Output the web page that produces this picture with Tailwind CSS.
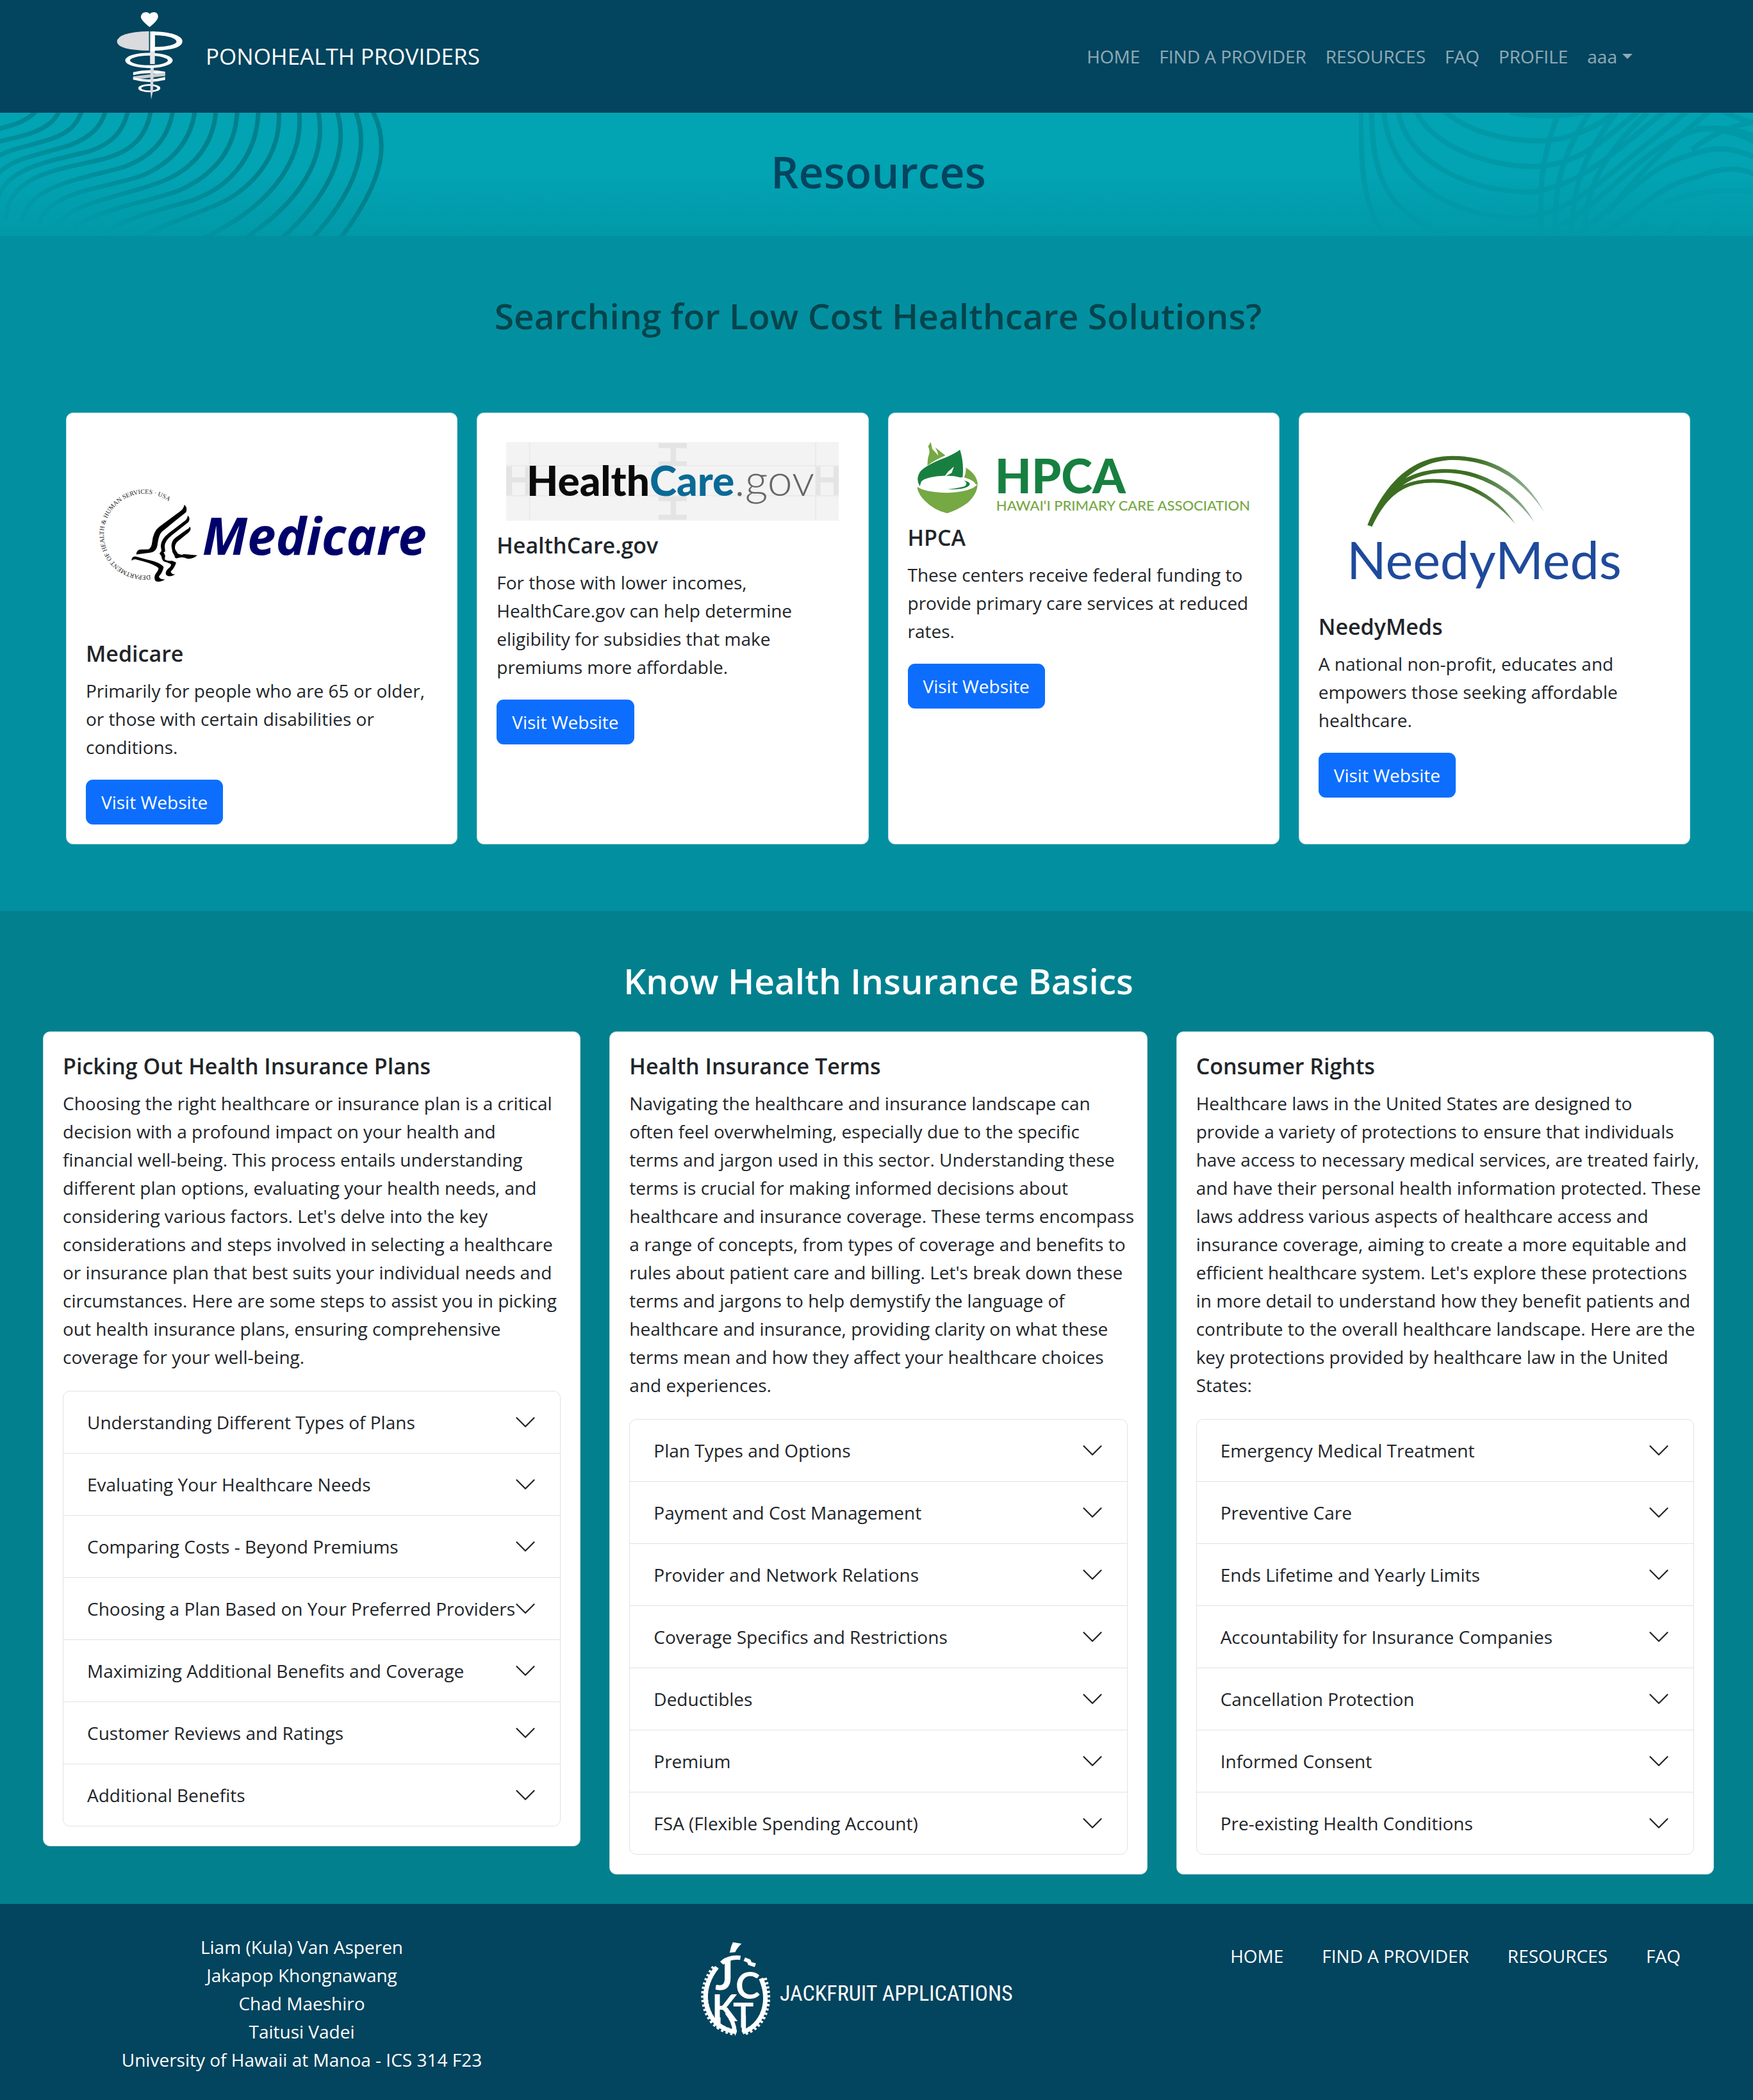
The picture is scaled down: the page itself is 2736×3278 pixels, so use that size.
<!DOCTYPE html>
<html lang="en">
<head>
<meta charset="utf-8">
<meta name="viewport" content="width=device-width, initial-scale=1">
<title>PonoHealth Providers - Resources</title>
<script src="https://cdn.jsdelivr.net/npm/@tailwindcss/browser@4"></script>
</head>
<body class="bg-[#03445e] font-['Open_Sans','Noto_Sans',sans-serif] text-[28px] leading-[44px] text-[#212529]">
<svg class="hidden" aria-hidden="true">
  <symbol id="chevron" viewBox="0 0 16 16"><path fill="none" stroke="#212529" stroke-linecap="round" stroke-linejoin="round" d="M2 5l6 6 6-6"/></symbol>
</svg>

<header class="flex items-center justify-between bg-[#03445e] py-4 pl-[182px] pr-[188px]">
  <a href="#" class="flex items-center gap-[35px] text-[35px] text-white">
    <svg class="h-36 w-[104px]" viewBox="182 16 104 144" aria-hidden="true">
      <g transform="scale(.574 .3333)">
        <path fill="#fff" d="M407 127Q383 95 383 78Q385 57 397 57Q405 58 407 66Q410 57 420 57Q430 60 430 78Q430 95 407 127Z"/>
        <path fill="#dadbde" d="M405 146Q320 150 318 195Q320 235 405 237Z"/>
        <ellipse cx="405" cy="283" rx="58" ry="29" fill="none" stroke="#fff" stroke-width="13"/>
        <path fill="#e6e7ea" d="M408 147H421V300H408Z"/>
        <path fill="#fff" d="M413 147C470 149 497 170 496 195C495 220 470 235 421 237V220C450 220 480 210 480 195C480 177 450 165 421 165V240H409Z"/>
        <path fill="#fff" d="M362 338Q405 320 449 336V352Q405 334 362 352Z"/>
        <path fill="#c9ccd1" d="M449 340V356L362 373V358Z"/>
        <path fill="#fff" d="M362 362Q405 383 449 360V374Q405 394 362 373Z"/>
        <ellipse cx="406" cy="413" rx="26" ry="15" fill="none" stroke="#fff" stroke-width="8"/>
        <path fill="#d5d8dc" d="M409 318H418L416 425L411 466L409 425Z"/>
      </g>
    </svg>
    PONOHEALTH PROVIDERS
  </a>
  <nav class="flex items-center gap-[30px] text-white/55">
    <a href="#">HOME</a>
    <a href="#">FIND A PROVIDER</a>
    <a href="#">RESOURCES</a>
    <a href="#">FAQ</a>
    <a href="#">PROFILE</a>
    <button type="button" class="flex items-center gap-2">aaa
      <svg class="h-2 w-4" viewBox="0 0 16 8" aria-hidden="true"><path fill="currentColor" d="M0 0H16L8 8Z"/></svg>
    </button>
  </nav>
</header>

<main>
  <section class="relative overflow-hidden bg-linear-to-b from-[#02a3b3] from-50% to-[#0199a8] pt-12 pb-14 pl-[6px]">
    <svg class="absolute left-0 top-0 h-full w-[600px] [&_path]:[vector-effect:non-scaling-stroke]" viewBox="0 528 1045 576" preserveAspectRatio="none" aria-hidden="true">
      <defs>
        <linearGradient id="fadeLeft" gradientUnits="userSpaceOnUse" x1="700" y1="528" x2="350" y2="1104">
          <stop offset=".3" stop-color="#01818d"/><stop offset="1" stop-color="#0199a8"/>
        </linearGradient>
      </defs>
      <g fill="none" stroke="url(#fadeLeft)" stroke-width="7">
        <path d="M1013 520C1055 660 1050 830 928 1110"/>
        <path d="M966 520C1000 660 985 860 852 1110"/>
        <path d="M916 520C945 680 915 880 770 1110"/>
        <path d="M865 520C885 690 850 900 672 1110"/>
        <path d="M813 520C825 720 760 940 560 1110"/>
        <path d="M758 520C765 720 690 900 560 980C500 1020 440 1060 380 1110"/>
        <path d="M702 520C700 700 640 870 520 940C420 990 340 1020 270 1104"/>
        <path d="M645 520C640 690 590 810 490 890C400 950 260 980 200 1070"/>
        <path d="M587 520C580 670 530 790 440 850C340 920 200 940 150 1060"/>
        <path d="M530 520C520 640 480 750 390 820C300 880 130 890 105 1050"/>
        <path d="M470 520C460 620 430 720 340 780C250 830 70 860 60 1040"/>
        <path d="M410 520C400 620 370 700 290 740C190 790 20 800 15 1030"/>
        <path d="M348 520C335 610 310 670 240 710C150 750 20 780-5 925"/>
        <path d="M287 520C275 590 250 640 190 680C120 720 30 740-5 815"/>
        <path d="M222 520C210 580 190 620 140 650C90 680 30 695-5 732"/>
        <path d="M160 520C150 570 120 600 90 620C60 640 25 650-5 664"/>
        <path d="M98 520C75 565 40 585-5 604"/>
      </g>
    </svg>
    <svg class="absolute right-0 top-0 h-full w-[615px] [&_path]:[vector-effect:non-scaling-stroke]" viewBox="680 528 888 576" preserveAspectRatio="none" aria-hidden="true">
      <g fill="none" stroke="#0199a8" stroke-width="8">
        <path d="M684 520C684 760 688 1000 745 1110"/>
        <path d="M708 520C712 760 720 1010 900 1110"/>
        <path d="M736 520C750 840 880 1010 1035 1022C1160 1010 1230 830 1350 640L1420 520"/>
        <path d="M768 520C790 760 920 890 1060 900C1180 880 1260 700 1370 520"/>
        <path d="M808 520C850 690 970 780 1080 780C1180 770 1240 640 1310 520"/>
        <path d="M872 520C930 620 1010 662 1090 660C1160 655 1220 590 1260 520"/>
        <path d="M1020 525Q1100 560 1190 525"/>
        <path d="M1130 528C1090 740 1085 900 1092 1110M1200 528C1130 740 1120 900 1122 1110M1260 528C1180 740 1160 900 1158 1110M1330 528C1210 760 1190 920 1188 1110"/>
        <path d="M1130 1060C1230 950 1300 740 1400 640Q1480 560 1575 640"/>
        <path d="M1170 1100C1270 950 1330 780 1420 730Q1500 660 1575 740"/>
        <path d="M1220 1104C1320 980 1350 870 1440 830Q1520 760 1575 820"/>
        <path d="M1500 520Q1540 560 1575 580M1440 600Q1520 600 1575 670M1575 570Q1500 590 1430 700M1470 520C1400 640 1310 800 1240 1000"/>
        <path d="M1370 950Q1460 870 1575 900M1330 1040L1300 1110M1400 1040L1370 1110M1490 1040L1460 1110" stroke-opacity=".4"/>
      </g>
    </svg>
    <h1 class="relative text-center text-[68px] font-semibold leading-[88px] text-[#03445e]">Resources</h1>
  </section>

  <section class="bg-[#0290a1] pt-[90px] pr-[98px] pb-[104px] pl-[103px]">
    <h2 class="mb-[116px] text-center text-[55px] font-semibold leading-[70px] text-[#05444c]">Searching for Low Cost Healthcare Solutions?</h2>
    <div class="grid grid-cols-4 gap-[30px]">
      <article class="rounded-[11px] border border-[#c5dfe3] bg-white p-[30px]">
        <svg class="mb-[15px] w-full px-[15px] pt-[15px]" viewBox="150 690 520 292" role="img" aria-label="Medicare logo">
          <path id="ring" fill="none" d="M236 898A64 64 0 1 1 278 796"/>
          <text class="font-['Liberation_Serif',serif] text-[10px]" fill="#222"><textPath href="#ring">DEPARTMENT OF HEALTH &amp; HUMAN SERVICES · USA</textPath></text>
          <g transform="translate(90 630) scale(.4082 .4464)">
            <path d="M487 354Q500 362 494 380L450 412L402 448Q390 458 385 490Q382 520 355 522L303 528Q305 510 322 511L350 510Q362 505 364 485Q368 448 390 432L470 378Q485 368 487 354Z"/>
            <path d="M500 392Q512 400 503 415L440 460Q412 480 412 500L414 518L408 520L414 532L412 545Q420 552 440 550L456 556Q450 575 435 588Q440 600 453 597Q430 610 418 600Q412 590 425 578Q438 570 436 562Q425 556 408 552Q400 545 400 535L392 525L400 515L397 500Q398 475 425 455L490 410Q500 402 500 392Z"/>
            <path d="M508 430Q516 440 505 450L465 480Q448 492 452 510L462 525Q475 532 485 527Q505 528 537 531Q520 545 500 543Q480 535 465 540Q450 545 450 533L442 520L438 500Q437 480 455 468L495 442Q507 436 508 430Z"/>
            <path d="M285 550Q285 535 300 535L340 545Q395 555 408 572Q405 590 390 605Q390 615 413 616Q395 627 378 622Q368 610 378 595Q390 582 388 575Q370 562 330 552L300 545Q290 545 285 550Z"/>
          </g>
          <text x="317" y="866" class="text-[80px] font-bold italic" fill="#00006b">Medicare</text>
        </svg>
        <h3 class="mb-[13px] text-[34px] font-semibold leading-[46px]">Medicare</h3>
        <p class="mb-[29px]">Primarily for people who are 65 or older, or those with certain disabilities or conditions.</p>
        <a href="#" class="inline-block rounded-[11px] bg-[#0d6efd] px-6 py-[13px] text-white">Visit Website</a>
      </article>

      <article class="rounded-[11px] border border-[#c5dfe3] bg-white p-[30px]">
        <svg class="mb-[15px] w-full px-[15px] pt-[15px]" viewBox="790 690 520 123" role="img" aria-label="HealthCare.gov logo">
          <path fill="#f3f3f3" d="M790 690H1310V813H790Z"/>
          <g transform="translate(740 630) scale(.4082 .3571)">
            <path fill="none" stroke="#e9e9e9" stroke-width="4" d="M212 168V512M1308 168V512M122 272H1396M122 403H1396"/>
            <path fill="#e4e4e4" d="M706 173H814V195H773V252H814V272H706V252H752V195H706ZM706 405H814V427H773V486H814V508H706V486H752V427H706ZM122 275H145V322H195V275H215V400H195V345H145V400H122ZM1308 275H1326V322H1376V275H1396V400H1376V345H1326V400H1308Z"/>
          </g>
          <text y="774" class="font-['Lato',sans-serif] text-[64px] font-black"><tspan x="822" fill="#0a0a0a">Health</tspan><tspan fill="#0a6a96">Care</tspan><tspan class="text-[70px] font-light" fill="#666">.gov</tspan></text>
        </svg>
        <h3 class="mb-[13px] text-[34px] font-semibold leading-[46px]">HealthCare.gov</h3>
        <p class="mb-[29px]">For those with lower incomes, HealthCare.gov can help determine eligibility for subsidies that make premiums more affordable.</p>
        <a href="#" class="inline-block rounded-[11px] bg-[#0d6efd] px-6 py-[13px] text-white">Visit Website</a>
      </article>

      <article class="rounded-[11px] border border-[#c5dfe3] bg-white p-[30px]">
        <svg class="mb-[15px] w-full px-[15px] pt-[15px]" viewBox="1432 690 520 111" role="img" aria-label="HPCA logo">
          <g transform="translate(1380 630) scale(.4082 .3333)">
            <path fill="#76a844" d="M178 180L168 200Q175 215 172 235Q164 260 166 290Q195 262 234 243L195 205Q205 225 207 244L184 212Z"/>
            <path fill="#178040" d="M290 216Q306 280 300 345L290 346Q265 337 236 339L258 325L267 295L245 318L233 338Q160 342 142 365L136 387Q118 350 140 315Q165 285 230 255Q270 235 290 216Z"/>
            <path fill="#76a844" d="M312 300Q355 330 358 380L350 378Q345 360 306 346Q315 320 312 300Z"/>
            <path fill="#76a844" d="M125 388Q150 415 240 418Q330 415 357 378Q358 420 320 465Q280 500 241 514Q190 500 155 455Q130 425 125 388Z"/>
            <path fill="#178040" d="M306 360Q342 372 318 390Q290 405 243 402Q290 395 308 387Q322 375 306 360Z"/>
          </g>
          <text x="1553" y="770" class="font-['Lato',sans-serif] text-[74px] font-black" fill="#178040">HPCA</text>
          <text x="1555" y="797" class="font-['Lato',sans-serif] text-[22px] font-medium" fill="#76a844">HAWAI‘I PRIMARY CARE ASSOCIATION</text>
        </svg>
        <h3 class="mb-[13px] text-[34px] font-semibold leading-[46px]">HPCA</h3>
        <p class="mb-[29px]">These centers receive federal funding to provide primary care services at reduced rates.</p>
        <a href="#" class="inline-block rounded-[11px] bg-[#0d6efd] px-6 py-[13px] text-white">Visit Website</a>
      </article>

      <article class="rounded-[11px] border border-[#c5dfe3] bg-white p-[30px]">
        <svg class="mb-[15px] w-full px-[15px] pt-[15px]" viewBox="2073 690 520 250" role="img" aria-label="NeedyMeds logo">
          <defs>
            <linearGradient id="blade" gradientUnits="userSpaceOnUse" x1="300" y1="0" x2="950" y2="0">
              <stop offset=".6" stop-color="#3c6e22"/><stop offset="1" stop-color="#a3bfae"/>
            </linearGradient>
          </defs>
          <g transform="translate(2010 630) scale(.4209 .4464)" fill="url(#blade)">
            <path d="M296 425C370 255 480 183 610 183C760 183 880 250 952 380C870 262 750 197 610 197C490 200 390 270 312 430Z"/>
            <path d="M296 425C350 290 450 229 585 229C720 229 850 300 915 415C835 310 710 242 585 242C450 244 380 300 312 430Z"/>
            <path d="M296 425C350 310 430 264 540 264C670 264 780 325 845 422C765 335 660 277 540 277C430 277 370 320 312 430Z"/>
          </g>
          <text x="2102" y="904" class="font-['Lato',sans-serif] text-[81px]" fill="#1f4a9c">NeedyMeds</text>
        </svg>
        <h3 class="mb-[13px] text-[34px] font-semibold leading-[46px]">NeedyMeds</h3>
        <p class="mb-[29px]">A national non-profit, educates and empowers those seeking affordable healthcare.</p>
        <a href="#" class="inline-block rounded-[11px] bg-[#0d6efd] px-6 py-[13px] text-white">Visit Website</a>
      </article>
    </div>
  </section>

  <section class="bg-[#02808e] pt-[74px] pr-[61px] pb-[46px] pl-[67px]">
    <h2 class="mb-11 text-center text-[55px] font-semibold leading-[70px] text-white">Know Health Insurance Basics</h2>
    <div class="grid grid-cols-3 items-start gap-[45px] [&_button]:flex [&_button]:w-full [&_button]:items-center [&_button]:justify-between [&_button]:py-[29px] [&_button]:pr-9 [&_button]:pl-[37px] [&_button]:text-left [&_button]:leading-[38px] [&_button]:whitespace-nowrap [&_button>svg]:-ml-2 [&_button>svg]:size-9 [&_button>svg]:shrink-0">
      <article class="rounded-[11px] border border-[#c5dfe3] bg-white p-[30px]">
        <h3 class="mb-[13px] text-[34px] font-semibold leading-[46px]">Picking Out Health Insurance Plans</h3>
        <p class="mb-[31px]">Choosing the right healthcare or insurance plan is a critical decision with a profound impact on your health and financial well-being. This process entails understanding different plan options, evaluating your health needs, and considering various factors. Let's delve into the key considerations and steps involved in selecting a healthcare or insurance plan that best suits your individual needs and circumstances. Here are some steps to assist you in picking out health insurance plans, ensuring comprehensive coverage for your well-being.</p>
        <ul class="divide-y divide-[#dee2e6] rounded-[11px] border border-[#dee2e6]">
          <li><button type="button">Understanding Different Types of Plans<svg><use href="#chevron"/></svg></button></li>
          <li><button type="button">Evaluating Your Healthcare Needs<svg><use href="#chevron"/></svg></button></li>
          <li><button type="button">Comparing Costs - Beyond Premiums<svg><use href="#chevron"/></svg></button></li>
          <li><button type="button">Choosing a Plan Based on Your Preferred Providers<svg><use href="#chevron"/></svg></button></li>
          <li><button type="button">Maximizing Additional Benefits and Coverage<svg><use href="#chevron"/></svg></button></li>
          <li><button type="button">Customer Reviews and Ratings<svg><use href="#chevron"/></svg></button></li>
          <li><button type="button">Additional Benefits<svg><use href="#chevron"/></svg></button></li>
        </ul>
      </article>
      <article class="rounded-[11px] border border-[#c5dfe3] bg-white p-[30px]">
        <h3 class="mb-[13px] text-[34px] font-semibold leading-[46px]">Health Insurance Terms</h3>
        <p class="-mr-5 mb-[31px]">Navigating the healthcare and insurance landscape can<br>
          often feel overwhelming, especially due to the specific<br>
          terms and jargon used in this sector. Understanding these<br>
          terms is crucial for making informed decisions about<br>
          healthcare and insurance coverage. These terms encompass<br>
          a range of concepts, from types of coverage and benefits to<br>
          rules about patient care and billing. Let's break down these<br>
          terms and jargons to help demystify the language of<br>
          healthcare and insurance, providing clarity on what these<br>
          terms mean and how they affect your healthcare choices<br>
          and experiences.</p>
        <ul class="divide-y divide-[#dee2e6] rounded-[11px] border border-[#dee2e6]">
          <li><button type="button">Plan Types and Options<svg><use href="#chevron"/></svg></button></li>
          <li><button type="button">Payment and Cost Management<svg><use href="#chevron"/></svg></button></li>
          <li><button type="button">Provider and Network Relations<svg><use href="#chevron"/></svg></button></li>
          <li><button type="button">Coverage Specifics and Restrictions<svg><use href="#chevron"/></svg></button></li>
          <li><button type="button">Deductibles<svg><use href="#chevron"/></svg></button></li>
          <li><button type="button">Premium<svg><use href="#chevron"/></svg></button></li>
          <li><button type="button">FSA (Flexible Spending Account)<svg><use href="#chevron"/></svg></button></li>
        </ul>
      </article>
      <article class="rounded-[11px] border border-[#c5dfe3] bg-white p-[30px]">
        <h3 class="mb-[13px] text-[34px] font-semibold leading-[46px]">Consumer Rights</h3>
        <p class="-mr-5 mb-[31px]">Healthcare laws in the United States are designed to<br>
          provide a variety of protections to ensure that individuals<br>
          have access to necessary medical services, are treated fairly,<br>
          and have their personal health information protected. These<br>
          laws address various aspects of healthcare access and<br>
          insurance coverage, aiming to create a more equitable and<br>
          efficient healthcare system. Let's explore these protections<br>
          in more detail to understand how they benefit patients and<br>
          contribute to the overall healthcare landscape. Here are the<br>
          key protections provided by healthcare law in the United<br>
          States:</p>
        <ul class="divide-y divide-[#dee2e6] rounded-[11px] border border-[#dee2e6]">
          <li><button type="button">Emergency Medical Treatment<svg><use href="#chevron"/></svg></button></li>
          <li><button type="button">Preventive Care<svg><use href="#chevron"/></svg></button></li>
          <li><button type="button">Ends Lifetime and Yearly Limits<svg><use href="#chevron"/></svg></button></li>
          <li><button type="button">Accountability for Insurance Companies<svg><use href="#chevron"/></svg></button></li>
          <li><button type="button">Cancellation Protection<svg><use href="#chevron"/></svg></button></li>
          <li><button type="button">Informed Consent<svg><use href="#chevron"/></svg></button></li>
          <li><button type="button">Pre-existing Health Conditions<svg><use href="#chevron"/></svg></button></li>
        </ul>
      </article>
    </div>
  </section>
</main>

<footer class="grid grid-cols-3 bg-[#03445e] pt-[45px] pr-[100px] pb-[39px] pl-[38px] text-white">
  <address class="text-center not-italic">
    Liam (Kula) Van Asperen<br>
    Jakapop Khongnawang<br>
    Chad Maeshiro<br>
    Taitusi Vadei<br>
    University of Hawaii at Manoa - ICS 314 F23
  </address>
  <svg class="mt-3 w-[488px] justify-self-center" viewBox="1092 3030 488 152" role="img" aria-label="Jackfruit Applications logo">
    <g transform="translate(1060 2960) scale(.3571 .3333)" fill="none" stroke="#fff">
      <path fill="#fff" stroke="none" d="M232 218L270 225Q250 245 242 265L218 267Q222 240 232 218Z"/>
      <path stroke-width="20" d="M183 316Q215 285 265 291"/>
      <path stroke-width="18" stroke-linejoin="round" d="M282 298L302 306L306 318L330 326"/>
      <path stroke-width="20" d="M162 335Q100 420 116 510Q140 620 248 640M355 388Q392 480 358 560Q330 620 274 640"/>
      <path stroke-width="30" stroke-dasharray="10 10" d="M154 338Q95 420 112 510Q136 625 245 641M365 388Q396 480 364 560Q335 625 276 641"/>
      <path stroke-width="18" d="M169 570V620M240 640Q238 590 205 548M280 560V640"/>
    </g>
    <g fill="#fff" class="font-['Lato',sans-serif] font-bold">
      <text x="1115" y="3107" class="text-[68px]">J</text>
      <text x="1147" y="3121" class="text-[58px]">C</text>
      <text x="1110" y="3156" class="text-[58px]">K</text>
      <text x="1143" y="3166" class="text-[54px]">T</text>
    </g>
    <text x="1216" y="3124" fill="#fff" class="font-['Roboto_Condensed','Liberation_Sans_Narrow','DejaVu_Sans_Condensed',sans-serif] text-[34px]">JACKFRUIT APPLICATIONS</text>
  </svg>
  <nav class="flex justify-end gap-[60px] pt-[14px] pr-[13px]">
    <a href="#">HOME</a>
    <a href="#">FIND A PROVIDER</a>
    <a href="#">RESOURCES</a>
    <a href="#">FAQ</a>
  </nav>
</footer>
</body>
</html>
